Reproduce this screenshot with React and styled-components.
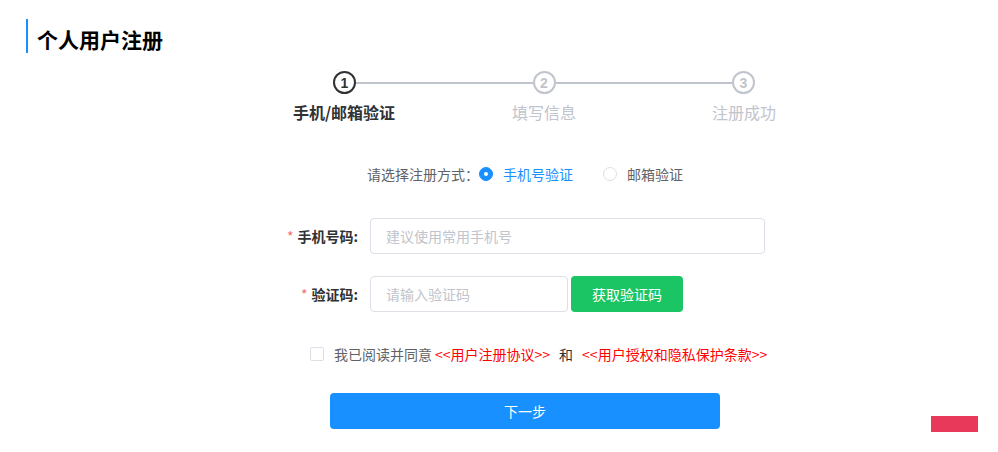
import React from "react";
import styled, { createGlobalStyle } from "styled-components";

const Global = createGlobalStyle`
  html, body { margin: 0; padding: 0; background: #fff; }
  body { font-family: "Noto Sans CJK SC", "Liberation Sans", sans-serif; }
  * { box-sizing: border-box; }
`;

const Page = styled.div`
  position: relative;
  width: 998px;
  height: 452px;
  overflow: hidden;
  padding-top: 19px;
`;

const Title = styled.h1`
  margin: 0 0 0 26px;
  height: 34px;
  border-left: 2px solid #1890ff;
  padding-left: 9px;
  padding-top: 5px;
  font-size: 21px;
  line-height: 30px;
  font-weight: 700;
  color: #000;
`;

const Steps = styled.div`
  margin: 18px 0 0 244px;
  width: 600px;
`;

const CircleRow = styled.div`
  display: flex;
  align-items: center;
  padding: 0 89px;
`;

const Circle = styled.div`
  width: 23px;
  height: 23px;
  border-radius: 50%;
  border: 2px solid ${(p) => (p.$active ? "#303133" : "#c0c4cc")};
  color: ${(p) => (p.$active ? "#303133" : "#c0c4cc")};
  font-family: "Liberation Sans", sans-serif;
  font-size: 14px;
  font-weight: 700;
  display: flex;
  align-items: center;
  justify-content: center;
  flex: none;
`;

const Connector = styled.div`
  flex: 1;
  height: 2px;
  background: #c0c4cc;
`;

const LabelRow = styled.div`
  display: flex;
  margin-top: 7px;
`;

const StepLabel = styled.div`
  width: 200px;
  text-align: center;
  font-size: 16px;
  line-height: 22px;
  font-weight: ${(p) => (p.$active ? 700 : 400)};
  color: ${(p) => (p.$active ? "#303133" : "#c0c4cc")};
`;

const RadioRow = styled.div`
  display: flex;
  align-items: center;
  margin: 41px 0 0 367px;
  font-size: 14px;
  line-height: 20px;
  color: #606266;
`;

const RadioItem = styled.label`
  display: flex;
  align-items: center;
  gap: 10px;
  margin-right: 30px;
  color: ${(p) => (p.$checked ? "#1890ff" : "#606266")};
`;

const RadioDot = styled.span`
  width: 14px;
  height: 14px;
  border-radius: 50%;
  border: 1px solid ${(p) => (p.$checked ? "#1890ff" : "#dcdfe6")};
  background: ${(p) => (p.$checked ? "#1890ff" : "#fff")};
  display: flex;
  align-items: center;
  justify-content: center;
  &::after {
    content: "";
    width: 4px;
    height: 4px;
    border-radius: 50%;
    background: #fff;
    display: ${(p) => (p.$checked ? "block" : "none")};
  }
`;

const Form = styled.div`
  margin: 34px 0 0 270px;
  display: flex;
  flex-direction: column;
  gap: 22px;
`;

const FormRow = styled.div`
  display: flex;
  align-items: center;
  gap: 12px;
`;

const FieldLabel = styled.div`
  width: 88px;
  text-align: right;
  font-size: 14px;
  font-weight: 700;
  color: #303133;
  span {
    color: #f56c6c;
    font-weight: 400;
    margin-right: 4px;
  }
`;

const Input = styled.input`
  width: ${(p) => p.$w}px;
  height: 36px;
  border: 1px solid #dcdfe6;
  border-radius: 4px;
  padding: 0 15px;
  font-family: inherit;
  font-size: 14px;
  color: #606266;
  outline: none;
  &::placeholder { color: #c0c4cc; }
`;

const CodeButton = styled.button`
  margin-left: -9px;
  width: 112px;
  height: 36px;
  border: none;
  border-radius: 4px;
  background: #1cc563;
  color: #fff;
  font-family: inherit;
  font-size: 14px;
`;

const AgreeRow = styled.div`
  display: flex;
  align-items: center;
  margin: 32px 0 0 310px;
  font-size: 14px;
  line-height: 20px;
  color: #606266;
`;

const Check = styled.span`
  width: 14px;
  height: 14px;
  border: 1px solid #dcdfe6;
  border-radius: 2px;
  margin-right: 10px;
`;

const Link = styled.a`
  color: #ff0000;
  text-decoration: none;
  margin: 0 ${(p) => p.$mr || 0}px 0 ${(p) => p.$ml || 0}px;
`;

const Joiner = styled.span`
  color: #303133;
`;

const NextButton = styled.button`
  display: block;
  margin: 29px 0 0 330px;
  width: 390px;
  height: 36px;
  border: none;
  border-radius: 4px;
  background: #1890ff;
  color: #fff;
  font-family: inherit;
  font-size: 14px;
`;

const FloatTag = styled.div`
  position: absolute;
  left: 931px;
  top: 416px;
  width: 47px;
  height: 16px;
  background: #e8395a;
`;

export default function App() {
  const steps = ["手机/邮箱验证", "填写信息", "注册成功"];
  return (
    <Page>
      <Global />
      <Title>个人用户注册</Title>
      <Steps>
        <CircleRow>
          <Circle $active>1</Circle>
          <Connector />
          <Circle>2</Circle>
          <Connector />
          <Circle>3</Circle>
        </CircleRow>
        <LabelRow>
          {steps.map((s, i) => (
            <StepLabel key={s} $active={i === 0}>{s}</StepLabel>
          ))}
        </LabelRow>
      </Steps>
      <RadioRow>
        <span>请选择注册方式：</span>
        <RadioItem $checked>
          <RadioDot $checked />
          手机号验证
        </RadioItem>
        <RadioItem>
          <RadioDot />
          邮箱验证
        </RadioItem>
      </RadioRow>
      <Form>
        <FormRow>
          <FieldLabel><span>*</span>手机号码:</FieldLabel>
          <Input $w={395} placeholder="建议使用常用手机号" />
        </FormRow>
        <FormRow>
          <FieldLabel><span>*</span>验证码:</FieldLabel>
          <Input $w={198} placeholder="请输入验证码" />
          <CodeButton>获取验证码</CodeButton>
        </FormRow>
      </Form>
      <AgreeRow>
        <Check />
        我已阅读并同意
        <Link $ml={3} $mr={9}>&lt;&lt;用户注册协议&gt;&gt;</Link>
        <Joiner>和</Joiner>
        <Link $ml={9}>&lt;&lt;用户授权和隐私保护条款&gt;&gt;</Link>
      </AgreeRow>
      <NextButton>下一步</NextButton>
      <FloatTag />
    </Page>
  );
}
